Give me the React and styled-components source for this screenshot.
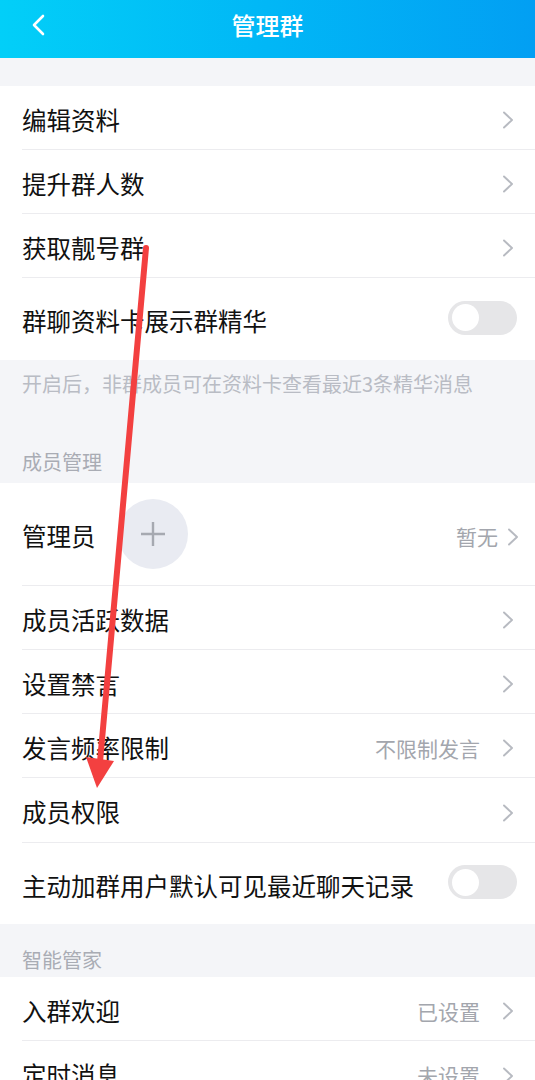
import React from 'react';
import styled, { createGlobalStyle } from 'styled-components';

const GlobalStyle = createGlobalStyle`
  * { box-sizing: border-box; }
  html, body {
    margin: 0;
    padding: 0;
    background: #f4f5f8;
    font-family: "Noto Sans CJK SC", "Noto Sans", sans-serif;
  }
`;

const groups = [
  {
    rows: [
      { label: '编辑资料', h: 64 },
      { label: '提升群人数', h: 64 },
      { label: '获取靓号群', h: 64 },
      { label: '群聊资料卡展示群精华', h: 82, toggle: true },
    ],
    note: '开启后，非群成员可在资料卡查看最近3条精华消息',
  },
  {
    title: '成员管理',
    titleH: 75,
    titlePb: 9,
    rows: [
      { label: '管理员', h: 103, plus: true, value: '暂无', valueGap: 9, shift: 5 },
      { label: '成员活跃数据', h: 64 },
      { label: '设置禁言', h: 64 },
      { label: '发言频率限制', h: 64, value: '不限制发言' },
      { label: '成员权限', h: 65 },
      { label: '主动加群用户默认可见最近聊天记录', h: 81, toggle: true },
    ],
  },
  {
    title: '智能管家',
    titleH: 53,
    titlePb: 5,
    rows: [
      { label: '入群欢迎', h: 64, value: '已设置' },
      { label: '定时消息', h: 64, value: '未设置' },
    ],
  },
];

function Chevron({ shift = 0 }) {
  return (
    <ChevronSvg width="12" height="20" viewBox="0 0 12 20" $shift={shift}>
      <path d="M2 2.5l8 7.5-8 7.5" fill="none" stroke="#b7bac1" strokeWidth="1.9" strokeLinecap="round" strokeLinejoin="round" />
    </ChevronSvg>
  );
}

function Row({ row, last }) {
  return (
    <RowWrap $h={row.h}>
      <RowInner $last={last}>
        <Label>{row.label}</Label>
        {row.plus && (
          <PlusCircle>
            <svg width="26" height="26" viewBox="0 0 26 26">
              <path d="M13 1v24M1 13h24" stroke="#a6a9b1" strokeWidth="2.4" />
            </svg>
          </PlusCircle>
        )}
        <Spacer />
        {row.toggle ? (
          <Toggle>
            <Knob />
          </Toggle>
        ) : (
          <>
            {row.value && <Value $gap={row.valueGap ?? 22}>{row.value}</Value>}
            <Chevron shift={row.shift} />
          </>
        )}
      </RowInner>
    </RowWrap>
  );
}

export default function App() {
  return (
    <Page>
      <GlobalStyle />
      <Header>
        <BackButton>
          <svg width="16" height="22" viewBox="0 0 16 22">
            <path d="M12 2L3 11l9 9" fill="none" stroke="#fff" strokeWidth="2.6" strokeLinecap="round" strokeLinejoin="round" />
          </svg>
        </BackButton>
        <Title>管理群</Title>
      </Header>
      <TopGap />
      {groups.map((g, gi) => (
        <React.Fragment key={gi}>
          {g.title && (
            <SectionTitle $h={g.titleH} $pb={g.titlePb}>
              {g.title}
            </SectionTitle>
          )}
          <Group>
            {g.rows.map((r, i) => (
              <Row key={r.label} row={r} last={i === g.rows.length - 1} />
            ))}
          </Group>
          {g.note && <Note>{g.note}</Note>}
        </React.Fragment>
      ))}
      <Annotation width="535" height="1080" viewBox="0 0 535 1080">
        <line x1="146" y1="248" x2="100" y2="762" stroke="#f34040" strokeWidth="6" strokeLinecap="round" />
        <polygon points="86,757 114,761 97,788" fill="#f34040" />
      </Annotation>
    </Page>
  );
}

const Page = styled.div`
  position: relative;
  width: 535px;
  height: 1080px;
  overflow: hidden;
  background: #f4f5f8;
`;

const Header = styled.div`
  height: 58px;
  display: flex;
  align-items: center;
  justify-content: center;
  position: relative;
  background: linear-gradient(90deg, #02cff8 0%, #01b7f6 50%, #029ff3 100%);
`;

const BackButton = styled.div`
  position: absolute;
  left: 28px;
  top: 13px;
  width: 22px;
  height: 24px;
  display: flex;
  align-items: center;
  justify-content: center;
`;

const Title = styled.div`
  color: #fff;
  font-size: 24px;
  font-weight: 500;
  margin-top: -10px;
`;

const TopGap = styled.div`
  height: 28px;
`;

const Group = styled.div`
  background: #fff;
`;

const RowWrap = styled.div`
  height: ${(p) => p.$h}px;
  padding-left: 22px;
`;

const RowInner = styled.div`
  height: 100%;
  display: flex;
  align-items: center;
  padding: 5px 22px 0 0;
  border-bottom: ${(p) => (p.$last ? 'none' : '1px solid #ececef')};
`;

const Label = styled.div`
  font-size: 24.5px;
  color: #111;
  line-height: 1;
  white-space: nowrap;
`;

const PlusCircle = styled.div`
  width: 70px;
  height: 70px;
  border-radius: 50%;
  background: #e9ebf2;
  margin: -5px 0 0 22px;
  display: flex;
  align-items: center;
  justify-content: center;
`;

const Spacer = styled.div`
  flex: 1;
`;

const Value = styled.div`
  font-size: 21px;
  color: #a3a6ad;
  margin-right: ${(p) => p.$gap}px;
  line-height: 1;
`;

const ChevronSvg = styled.svg`
  display: block;
  margin-right: ${(p) => -1 - p.$shift}px;
`;

const Toggle = styled.div`
  width: 69px;
  height: 34px;
  border-radius: 17px;
  background: #e6e6e8;
  display: flex;
  align-items: center;
  padding-left: 4px;
  margin: -8px -4px 0 0;
`;

const Knob = styled.div`
  width: 27px;
  height: 27px;
  border-radius: 50%;
  background: #fff;
`;

const Note = styled.div`
  height: 48px;
  padding: 0 22px;
  display: flex;
  align-items: center;
  font-size: 20px;
  color: #b9bcc4;
  line-height: 24px;
  white-space: nowrap;
`;

const SectionTitle = styled.div`
  height: ${(p) => p.$h}px;
  padding: 0 22px ${(p) => p.$pb}px;
  display: flex;
  align-items: flex-end;
  font-size: 20px;
  line-height: 24px;
  color: #a9acb4;
`;

const Annotation = styled.svg`
  position: absolute;
  left: 0;
  top: 0;
  pointer-events: none;
`;
